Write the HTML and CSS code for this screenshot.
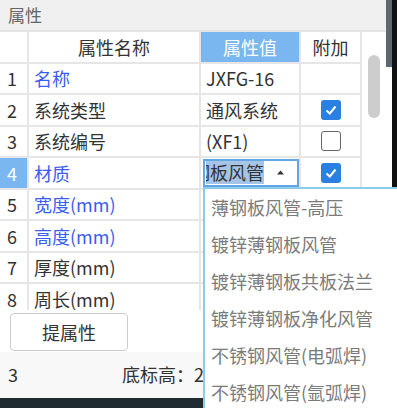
FILE: index.html
```html
<!DOCTYPE html>
<html>
<head>
  <title>属性</title>
  <link rel="stylesheet" href="styles.css">
</head>
<body>
  <div class="screen">
    <div class="main">
      <div class="title">属性</div>

      <div class="grid-area">
        <div class="table">
          <div class="cell num"></div>
          <div class="cell head">属性名称</div>
          <div class="cell head active">属性值</div>
          <div class="cell head">附加</div>

          <div class="cell num">1</div>
          <div class="cell name blue">名称</div>
          <div class="cell value">JXFG-16</div>
          <div class="cell check"></div>

          <div class="cell num">2</div>
          <div class="cell name">系统类型</div>
          <div class="cell value">通风系统</div>
          <div class="cell check">
            <span class="box on"><svg width="14" height="14" viewBox="0 0 14 14"><polyline points="2.5,7.5 5.8,10.5 11.5,3.5" fill="none" stroke="#fff" stroke-width="2"/></svg></span>
          </div>

          <div class="cell num">3</div>
          <div class="cell name">系统编号</div>
          <div class="cell value">(XF1)</div>
          <div class="cell check"><span class="box"></span></div>

          <div class="cell num selected">4</div>
          <div class="cell name blue">材质</div>
          <div class="cell value editing">
            <div class="editor">
              <div class="clip"><span class="sel">镀锌薄钢板风管</span></div>
              <svg class="arrow" width="7" height="5" viewBox="0 0 7 5"><polygon points="3.5,0.5 7,4.5 0,4.5" fill="#333"/></svg>
            </div>
          </div>
          <div class="cell check">
            <span class="box on"><svg width="14" height="14" viewBox="0 0 14 14"><polyline points="2.5,7.5 5.8,10.5 11.5,3.5" fill="none" stroke="#fff" stroke-width="2"/></svg></span>
          </div>

          <div class="cell num">5</div>
          <div class="cell name blue">宽度(mm)</div>
          <div class="cell value"></div>
          <div class="cell check"></div>

          <div class="cell num">6</div>
          <div class="cell name blue">高度(mm)</div>
          <div class="cell value"></div>
          <div class="cell check"></div>

          <div class="cell num">7</div>
          <div class="cell name">厚度(mm)</div>
          <div class="cell value"></div>
          <div class="cell check"></div>

          <div class="cell num">8</div>
          <div class="cell name">周长(mm)</div>
          <div class="cell value"></div>
          <div class="cell check"></div>
        </div>

        <div class="track"><div class="thumb"></div></div>
      </div>

      <div class="actions">
        <button class="btn" type="button">提属性</button>
      </div>

      <div class="footer">
        <span class="count">3</span>
        <span class="elev">底标高：2</span>
      </div>

      <div class="band"></div>
    </div>

    <div class="edge">
      <div class="edge-top"></div>
      <div class="edge-mid"></div>
    </div>

    <ul class="dropdown">
      <li>薄钢板风管-高压</li>
      <li>镀锌薄钢板风管</li>
      <li>镀锌薄钢板共板法兰</li>
      <li>镀锌薄钢板净化风管</li>
      <li>不锈钢风管(电弧焊)</li>
      <li>不锈钢风管(氩弧焊)</li>
    </ul>
  </div>
</body>
</html>
```

FILE: styles.css
```css
body {
  margin: 0;
  padding: 0;
  background-color: #ffffff;
  font-family: "Noto Sans CJK SC", "Noto Sans", sans-serif;
  font-size: 18px;
  color: #333333;
}

.screen {
  position: relative;
  display: flex;
  width: 397px;
  height: 408px;
  overflow: hidden;
}

.main {
  display: flex;
  flex-direction: column;
  width: 386px;
}

.title {
  height: 30px;
  line-height: 30px;
  padding-left: 8px;
  font-size: 17px;
  color: #666666;
  background-color: #f0f0f0;
  border-bottom: 2px solid #e4e4e4;
}

/* grid */

.grid-area {
  display: flex;
  height: 278px;
  overflow: hidden;
}

.table {
  display: grid;
  grid-template-columns: 29px 172px 100px 61px;
  grid-auto-rows: 31.5px;
  width: 362px;
}

.cell {
  box-sizing: border-box;
  border-right: 2px solid #e6e6e6;
  border-bottom: 2px solid #e6e6e6;
  display: flex;
  align-items: center;
  white-space: nowrap;
  overflow: hidden;
}

.num {
  padding-left: 7px;
}

.num.selected {
  background-color: #7ab6ef;
  color: #ffffff;
}

.head {
  justify-content: center;
}

.head.active {
  background-color: #7ab6ef;
  color: #ffffff;
}

.name {
  padding-left: 5px;
}

.blue {
  color: #3b5cf2;
}

.value {
  padding-left: 5px;
}

.value.editing {
  padding: 0 0 0 2px;
  overflow: visible;
  position: relative;
  z-index: 1;
}

.editor {
  display: flex;
  align-items: center;
  box-sizing: border-box;
  width: 97px;
  height: 28px;
  border: 2px solid #62a6e6;
  background-color: #ffffff;
}

.clip {
  display: flex;
  justify-content: flex-end;
  width: 58px;
  margin-left: 1px;
  overflow: hidden;
}

.sel {
  flex-shrink: 0;
  background-color: #a6c4e6;
  line-height: 23px;
}

.arrow {
  margin-left: 13px;
}

.check {
  justify-content: center;
}

.box {
  box-sizing: border-box;
  width: 20px;
  height: 20px;
  border: 1.5px solid #666666;
  border-radius: 3px;
  display: flex;
  align-items: center;
  justify-content: center;
}

.box.on {
  border: none;
  background-color: #2b7fe0;
}

.track {
  width: 24px;
  background-color: #ffffff;
}

.thumb {
  width: 12px;
  height: 63px;
  margin: 23px 0 0 6px;
  border-radius: 6px;
  background-color: #cdcdcd;
}

/* bottom */

.actions {
  height: 42px;
  padding: 3px 0 0 10px;
  box-sizing: border-box;
}

.btn {
  width: 118px;
  height: 38px;
  background-color: #ffffff;
  border: 1px solid #cccccc;
  border-radius: 4px;
  font-family: inherit;
  font-size: 18px;
  color: #333333;
}

.footer {
  display: flex;
  align-items: center;
  height: 46px;
  padding-bottom: 3px;
  box-sizing: border-box;
  background-color: #f8f8f8;
  white-space: nowrap;
}

.count {
  width: 114px;
  padding-left: 8px;
}

.band {
  height: 10px;
  background-color: #1f2b31;
}

.edge {
  width: 11px;
}

.edge-top {
  height: 67px;
  background: linear-gradient(to right, #5e6872 6px, #111111 6px);
}

.edge-mid {
  height: 120px;
  background: linear-gradient(to right, #ffffff 6px, #111111 6px);
}

/* dropdown */

.dropdown {
  position: absolute;
  left: 203px;
  top: 187px;
  width: 194px;
  height: 221px;
  margin: 0;
  padding: 0;
  list-style: none;
  background-color: #ffffff;
  border-top: 2px solid #8ccbea;
  border-left: 2px solid #8ccbea;
  z-index: 2;
}

.dropdown li {
  height: 37px;
  line-height: 37px;
  padding-left: 6px;
  color: #7b7b7b;
  white-space: nowrap;
}
```
